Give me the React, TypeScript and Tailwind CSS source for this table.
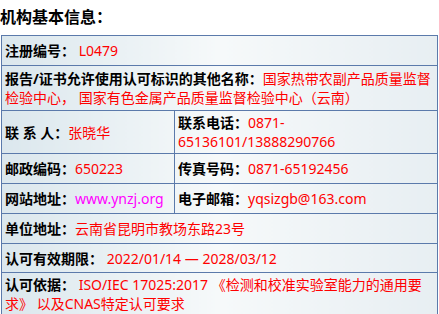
import React from 'react';

const font = { fontFamily: '"Noto Sans", "Noto Sans CJK SC", sans-serif' };

function Label({ children }: { children: React.ReactNode }) {
  return <span className="font-bold text-black">{children}</span>;
}

function Value({ children, className = '' }: { children: React.ReactNode; className?: string }) {
  return <span className={`text-[#ff0000] ${className}`}>{children}</span>;
}

function App() {
  const cell = 'border border-[#5b7aab] px-[3px] py-[2px] align-middle';
  return (
    <div className="w-[439px] h-[314px] overflow-hidden bg-white text-[14px] leading-[19px]" style={font}>
      <h2 className="pt-[5px] mb-[5px] text-[16px] leading-[25px] font-bold text-black">机构基本信息：</h2>
      <table className="ml-px w-[437px] border-collapse table-fixed bg-linear-to-r from-[#dbe7ed] via-[#f6f9fa] to-[#e7eef2]">
        <colgroup>
          <col className="w-[173px]" />
          <col />
        </colgroup>
        <tbody>
          <tr className="h-[30px]">
            <td className={cell} colSpan={2}>
              <Label>注册编号：</Label>
              <Value> L0479</Value>
            </td>
          </tr>
          <tr>
            <td className={`${cell} py-[3px]`} colSpan={2}>
              <Label>报告/证书允许使用认可标识的其他名称：</Label>
              <Value>国家热带农副产品质量监督检验中心， 国家有色金属产品质量监督检验中心（云南）</Value>
            </td>
          </tr>
          <tr>
            <td className={cell}>
              <Label>联 系 人：</Label>
              <Value>张晓华</Value>
            </td>
            <td className={cell}>
              <Label>联系电话：</Label>
              <Value>0871-65136101/13888290766</Value>
            </td>
          </tr>
          <tr className="h-[30px]">
            <td className={cell}>
              <Label>邮政编码：</Label>
              <Value>650223</Value>
            </td>
            <td className={cell}>
              <Label>传真号码：</Label>
              <Value>0871-65192456</Value>
            </td>
          </tr>
          <tr className="h-[30px]">
            <td className={cell}>
              <Label>网站地址：</Label>
              <span className="text-[#ff00ff]">www.ynzj.org</span>
            </td>
            <td className={cell}>
              <Label>电子邮箱：</Label>
              <Value>yqsizgb@163.com</Value>
            </td>
          </tr>
          <tr className="h-[30px]">
            <td className={cell} colSpan={2}>
              <Label>单位地址：</Label>
              <Value>云南省昆明市教场东路23号</Value>
            </td>
          </tr>
          <tr className="h-[29px]">
            <td className={cell} colSpan={2}>
              <Label>认可有效期限：</Label>
              <Value> 2022/01/14 — 2028/03/12</Value>
            </td>
          </tr>
          <tr>
            <td className={cell} colSpan={2}>
              <Label>认可依据：</Label>
              <Value> ISO/IEC 17025:2017 《检测和校准实验室能力的通用要求》 以及CNAS特定认可要求</Value>
            </td>
          </tr>
        </tbody>
      </table>
    </div>
  );
}

export default App;
